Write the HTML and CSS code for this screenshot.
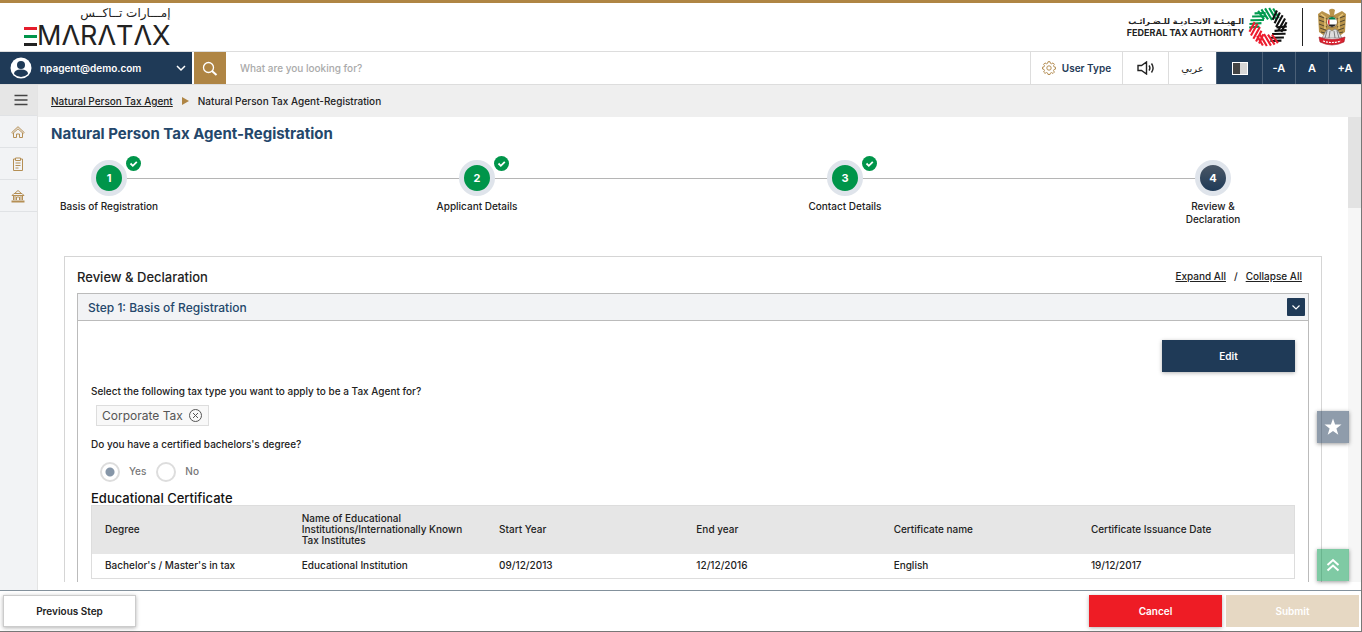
FILE: index.html
```html
<!DOCTYPE html>
<html lang="en">
<head>
  <meta charset="UTF-8" />
  <meta name="viewport" content="width=device-width, initial-scale=1" />
  <title>Natural Person Tax Agent-Registration</title>
  <link rel="stylesheet" href="styles.css">
</head>
<body>

  <header class="header">
    <a class="brand" href="#" aria-label="EmaraTax">
      <span class="brand-ar" lang="ar" dir="rtl">إمـــارات تــاكــس</span>
      <span class="brand-en"><span class="brand-bars"></span>MΛRΛTΛX</span>
    </a>
    <div class="authority">
      <div class="authority-name">
        <span class="authority-ar" lang="ar" dir="rtl">الـهيـئـة الاتحـاديـة للـضـرائـب</span>
        <span class="authority-en">FEDERAL TAX AUTHORITY</span>
      </div>
      <svg class="ring" viewBox="-20 -20 40 40" aria-hidden="true">
        <defs>
          <g id="hatch" fill="none" stroke-width="2.100">
            <path d="M-12-14.500L-5-7M-9-16.500L-1-7.500M-5.500-18L3-7.500M-1.500-19L7-8.500M2.500-19L9.500-10.500" />
          </g>
        </defs>
        <use href="#hatch" stroke="#009a4e" transform="rotate(-52)" />
        <use href="#hatch" stroke="#009a4e" transform="rotate(8)" />
        <use href="#hatch" stroke="#111" transform="rotate(68)" />
        <use href="#hatch" stroke="#111" transform="rotate(128)" />
        <use href="#hatch" stroke="#ed1c2e" transform="rotate(188)" />
        <use href="#hatch" stroke="#ed1c2e" transform="rotate(248)" />
      </svg>
      <span class="divider"></span>
      <svg class="emblem" viewBox="0 0 30 38" aria-hidden="true">
        <path d="M12 2q3-2.500 6 0l-1 5 4-2 4-2 4 3-1 18-7 5H9l-7-5L1 6l4-3 8 4z" fill="#b8934a" />
        <path d="M2 8l8 3M2 12l8 3M2 16l8 3M3 20l8 3M4 24l8 2M28 8l-8 3M28 12l-8 3M28 16l-8 3M27 20l-8 3M26 24l-8 2" stroke="#54482f" fill="none" />
        <path d="M4 6l4 3v12M26 6l-4 3v12" stroke="#e7c577" stroke-width="1.500" fill="none" />
        <circle cx="15" cy="14" r="5.500" fill="#fff" stroke="#8d6a2e" />
        <path d="M11 11.500a4.500 4.500 0 0 1 8 0z" fill="#00804a" />
        <path d="M11 16.500a4.500 4.500 0 0 0 8 0z" fill="#222" />
        <path d="M12.500 10.500v7a4.500 4.500 0 0 1 0-7z" fill="#e21f2d" />
        <path d="M9 23l3-2 3 2 3-2 3 2 4 7H5z" fill="#ddd" stroke="#777" stroke-width=".6" />
        <path d="M10 23l-2 7M13 23l-1 7M17 23l1 7M20 23l2 7" stroke="#555" stroke-width=".7" />
        <path d="M2 29q13 5 26 0l-1 5q-12 6-24 0z" fill="#d9202e" stroke="#a31824" stroke-width=".6" />
        <path d="M6 33q9 3 18 0" stroke="#fff" stroke-width="1.200" stroke-dasharray="2 1" fill="none" />
      </svg>
    </div>
  </header>

  <div class="toolbar">
    <button class="account" type="button">
      <svg width="22" height="22" viewBox="0 0 22 22" aria-hidden="true">
        <circle cx="11" cy="11" r="10.500" fill="#fff" />
        <circle cx="11" cy="8" r="4" fill="#1f3a57" />
        <path d="M4 17q0-4.500 7-4.500t7 4.500q-3 3-7 3t-7-3z" fill="#1f3a57" />
      </svg>
      <span class="account-name">npagent@demo.com</span>
      <svg width="10" height="8" viewBox="0 0 10 8" aria-hidden="true"><path d="M1 2l4 4 4-4" fill="none" stroke="#fff" stroke-width="1.500" /></svg>
    </button>
    <button class="search-btn" type="button" aria-label="Search">
      <svg width="16" height="16" viewBox="0 0 16 16" fill="none" stroke="#fff" aria-hidden="true">
        <circle cx="6.500" cy="7.500" r="5" stroke-width="1.300" />
        <path d="M10 11l4.500 4" stroke-width="2" />
      </svg>
    </button>
    <input class="search" type="text" placeholder="What are you looking for?" aria-label="What are you looking for?">
    <button class="tool user-type" type="button">
      <svg width="14" height="14" viewBox="0 0 14 14" fill="none" stroke="#b58f55" aria-hidden="true">
        <path d="M6 .7h2l.4 1.600 1.200.5 1.400-.9 1.400 1.400-.9 1.400.5 1.200 1.500.3v1.900l-1.500.4-.5 1.200.9 1.400-1.400 1.400-1.400-.9-1.200.5L8 13.500H6l-.4-1.500-1.200-.5-1.400.9L1.600 11l.9-1.400L2 8.400.5 8V6.200L2 5.900l.5-1.200-.9-1.400L3 1.900l1.400.9 1.200-.5z" />
        <circle cx="7" cy="7" r="2.200" />
      </svg>
      User Type
    </button>
    <button class="tool sound" type="button" aria-label="Read aloud">
      <svg width="18" height="14" viewBox="0 0 18 14" fill="none" stroke="#222" stroke-width="1.400" aria-hidden="true">
        <path d="M1 4.500h3.500L9.500 1v12L4.500 9.500H1zM12 4.500q1.800 2.500 0 5M14.500 2.500q3.200 4.500 0 9" />
      </svg>
    </button>
    <button class="tool arabic" type="button" lang="ar">عربي</button>
    <button class="tool dark contrast" type="button" aria-label="Contrast">
      <svg width="16" height="13" viewBox="0 0 16 13" aria-hidden="true">
        <path d="M0 0h16v13H0z" fill="#fff" />
        <path d="M1 1h7v11H1z" fill="#444" />
        <path d="M8 1h7v11H8z" fill="#d6d6d6" />
      </svg>
    </button>
    <button class="tool dark" type="button">-A</button>
    <button class="tool dark" type="button">A</button>
    <button class="tool dark" type="button">+A</button>
  </div>

  <div class="page">
    <nav class="sidebar" aria-label="Main">
      <button class="side-item menu" type="button" aria-label="Menu">
        <svg width="14" height="12" viewBox="0 0 14 12" stroke="#444" stroke-width="1.500" aria-hidden="true"><path d="M.5 1.500h13M.5 6h13M.5 10.500h13" /></svg>
      </button>
      <a class="side-item" href="#" aria-label="Home">
        <svg width="14" height="14" viewBox="0 0 14 14" fill="none" stroke="#b58f55" aria-hidden="true">
          <path d="M.8 7.500L7 1.700l6.200 5.800-1 1L7 3.800 1.800 8.500zM2.500 8v4.500h3V9h3v3.500h3V8" />
        </svg>
      </a>
      <a class="side-item" href="#" aria-label="Requests">
        <svg width="14" height="14" viewBox="0 0 14 14" fill="none" stroke="#b58f55" aria-hidden="true">
          <path d="M4.500 2h-2v11.500h9V2h-2M4.500 1h5v2.500h-5zM4.500 6h5M4.500 8.500h5M4.500 11h3" />
        </svg>
      </a>
      <a class="side-item" href="#" aria-label="Authority">
        <svg width="14" height="14" viewBox="0 0 14 14" fill="none" stroke="#b58f55" aria-hidden="true">
          <path d="M3.500 4.500L7 1.500l3.500 3M1 6.500l2-2h8l2 2zM2.500 7v4M11.500 7v4M5.500 11V8h3v3M4 7v4M10 7v4" />
          <path d="M.5 12.500h13" stroke-width="2" />
        </svg>
      </a>
    </nav>

    <main class="main">
      <nav class="breadcrumb" aria-label="Breadcrumb">
        <a href="#">Natural Person Tax Agent</a>
        <span class="arrow"></span>
        <span>Natural Person Tax Agent-Registration</span>
      </nav>

      <div class="scroller">
        <div class="content">
          <h1>Natural Person Tax Agent-Registration</h1>

          <ol class="steps">
            <li class="step done">
              <span class="dot">1</span>
              <svg class="tick" viewBox="0 0 15 15" aria-hidden="true"><circle cx="7.500" cy="7.500" r="7.500" fill="#00954a" /><path d="M4.500 7.500l2.300 2.300 4-4" fill="none" stroke="#fff" stroke-width="1.800" /></svg>
              <span class="step-label">Basis of Registration</span>
            </li>
            <li class="step done">
              <span class="dot">2</span>
              <svg class="tick" viewBox="0 0 15 15" aria-hidden="true"><circle cx="7.500" cy="7.500" r="7.500" fill="#00954a" /><path d="M4.500 7.500l2.300 2.300 4-4" fill="none" stroke="#fff" stroke-width="1.800" /></svg>
              <span class="step-label">Applicant Details</span>
            </li>
            <li class="step done">
              <span class="dot">3</span>
              <svg class="tick" viewBox="0 0 15 15" aria-hidden="true"><circle cx="7.500" cy="7.500" r="7.500" fill="#00954a" /><path d="M4.500 7.500l2.300 2.300 4-4" fill="none" stroke="#fff" stroke-width="1.800" /></svg>
              <span class="step-label">Contact Details</span>
            </li>
            <li class="step current">
              <span class="dot">4</span>
              <span class="step-label">Review &amp;<br>Declaration</span>
            </li>
          </ol>

          <section class="card">
            <div class="card-head">
              <h2>Review &amp; Declaration</h2>
              <div class="toggles"><a href="#">Expand All</a><span>/</span><a href="#">Collapse All</a></div>
            </div>

            <div class="panel">
              <div class="panel-head">
                <h3>Step 1: Basis of Registration</h3>
                <button class="collapse" type="button" aria-label="Collapse">
                  <svg width="10" height="8" viewBox="0 0 10 8" aria-hidden="true"><path d="M1.500 2.500L5 6l3.500-3.500" fill="none" stroke="#fff" stroke-width="1.200" /></svg>
                </button>
              </div>
              <div class="panel-body">
                <button class="btn edit" type="button">Edit</button>

                <p class="question">Select the following tax type you want to apply to be a Tax Agent for?</p>
                <div class="chip">
                  Corporate Tax
                  <button type="button" aria-label="Remove Corporate Tax">
                    <svg width="13" height="13" viewBox="0 0 13 13" fill="none" stroke="#555" aria-hidden="true"><circle cx="6.500" cy="6.500" r="6" /><path d="M4 4l5 5M9 4L4 9" /></svg>
                  </button>
                </div>

                <fieldset class="degree">
                  <legend class="question">Do you have a certified bachelors's degree?</legend>
                  <input type="radio" name="degree" id="degree-yes" checked><label for="degree-yes">Yes</label>
                  <input type="radio" name="degree" id="degree-no"><label for="degree-no">No</label>
                </fieldset>

                <h4>Educational Certificate</h4>
                <table>
                  <thead>
                    <tr>
                      <th>Degree</th>
                      <th>Name of Educational Institutions/Internationally Known Tax Institutes</th>
                      <th>Start Year</th>
                      <th>End year</th>
                      <th>Certificate name</th>
                      <th class="last">Certificate Issuance Date</th>
                    </tr>
                  </thead>
                  <tbody>
                    <tr>
                      <td>Bachelor's / Master's in tax</td>
                      <td>Educational Institution</td>
                      <td>09/12/2013</td>
                      <td>12/12/2016</td>
                      <td>English</td>
                      <td>19/12/2017</td>
                    </tr>
                  </tbody>
                </table>
              </div>
            </div>
          </section>
        </div>
        <div class="scrollbar"><div class="thumb"></div></div>

        <div class="floating">
          <button class="float-btn star" type="button" aria-label="Rate">
            <svg width="18" height="18" viewBox="0 0 18 18" aria-hidden="true"><path d="M9 .5l2.100 6h6.400l-5.100 3.900 1.900 6.300L9 12.900l-5.300 3.800 1.900-6.300L.5 6.500h6.400z" fill="#fff" /></svg>
          </button>
          <button class="float-btn up" type="button" aria-label="Back to top">
            <svg width="14" height="14" viewBox="0 0 14 14" fill="none" stroke="#fff" stroke-width="2" aria-hidden="true"><path d="M1.500 7L7 2l5.500 5M1.500 12.500L7 7.500l5.500 5" /></svg>
          </button>
        </div>
      </div>
    </main>
  </div>

  <footer class="footer">
    <button class="btn previous" type="button">Previous Step</button>
    <button class="btn cancel" type="button">Cancel</button>
    <button class="btn submit" type="button" disabled>Submit</button>
  </footer>

</body>
</html>
```
FILE: styles.css
```css
* {
  box-sizing: border-box;
}

body {
  display: flex;
  flex-direction: column;
  height: 100vh;
  margin: 0;
  overflow: hidden;
  border-right: 1px solid #777;
  border-bottom: 1px solid #777;
  background: #fff;
  color: #222;
  font-family: Inter, "DejaVu Sans", sans-serif;
  font-size: 10px;
  font-weight: 500;
}

button,
input {
  font: inherit;
}

button {
  padding: 0;
  border: 0;
  cursor: pointer;
}

a {
  color: inherit;
}

h1,
h2,
h3,
h4,
p {
  margin: 0;
}

/* header */
.header {
  display: flex;
  justify-content: space-between;
  height: 52px;
  border-top: 3px solid #af8544;
  border-bottom: 1px solid #ddd;
}

.brand {
  display: flex;
  flex-direction: column;
  align-items: flex-end;
  margin-left: 24px;
  text-decoration: none;
}

.brand-ar {
  font-family: "DejaVu Sans", sans-serif;
  font-size: 12px;
  line-height: 20px;
}

.brand-en {
  display: flex;
  align-items: center;
  font-size: 27px;
  font-weight: 400;
  line-height: 26px;
}

.brand-bars {
  width: 13px;
  height: 19px;
  border-top: 3px solid #e51d2c;
  border-bottom: 3px solid #222;
  background: linear-gradient(#00954a, #00954a) center / 100% 3px no-repeat;
}

.authority {
  display: flex;
  align-items: center;
  margin-right: 14px;
}

.authority-name {
  display: flex;
  flex-direction: column;
  align-items: flex-end;
}

.authority-ar {
  font-family: "DejaVu Sans", sans-serif;
  font-size: 8px;
  font-weight: 700;
  line-height: 12px;
}

.authority-en {
  font-size: 9px;
  font-weight: 700;
  line-height: 10px;
}

.ring {
  width: 40px;
  height: 40px;
  margin-left: 4px;
}

.divider {
  height: 38px;
  margin: 0 14px;
  border-left: 1px solid #222;
}

.emblem {
  width: 30px;
  height: 38px;
}

/* toolbar */
.toolbar {
  display: flex;
  height: 33px;
  border-bottom: 1px solid #ddd;
}

.account {
  display: flex;
  align-items: center;
  width: 192px;
  margin-right: 2px;
  padding: 0 6px 0 10px;
  background: #1f3a57;
  color: #fff;
  font-weight: 600;
}

.account-name {
  flex: 1;
  margin-left: 8px;
  text-align: left;
}

.search-btn {
  display: flex;
  align-items: center;
  justify-content: center;
  width: 32px;
  background: #af8544;
}

.search {
  flex: 1;
  padding: 0 14px;
  border: 0;
}

.search::placeholder {
  color: #aaa;
}

.tool {
  display: flex;
  align-items: center;
  justify-content: center;
  gap: 6px;
  width: 33px;
  border-left: 1px solid #ddd;
  background: #fff;
  color: #1f3a57;
  font-weight: 600;
}

.user-type {
  width: 92px;
}

.sound {
  width: 46px;
}

.arabic {
  width: 48px;
  color: #222;
  font-weight: 400;
}

.dark {
  border-left-color: #4b6077;
  background: #1f3a57;
  color: #fff;
  font-size: 11px;
}

.contrast {
  width: 46px;
}

/* page */
.page {
  display: flex;
  flex: 1;
  min-height: 0;
}

.sidebar {
  width: 38px;
  border-right: 1px solid #e4e4e4;
  background: #f2f3f5;
}

.side-item {
  display: flex;
  align-items: center;
  justify-content: center;
  width: 100%;
  height: 32px;
  padding-right: 2px;
  border-bottom: 1px solid #e0e2e5;
}

.menu {
  height: 31px;
  padding: 0 0 0 4px;
  background: #e6e6e6;
}

.main {
  display: flex;
  flex: 1;
  flex-direction: column;
  min-width: 0;
}

.breadcrumb {
  display: flex;
  align-items: center;
  gap: 9px;
  height: 32px;
  padding-left: 13px;
  background: #efefef;
}

.arrow {
  border: 4px solid transparent;
  border-right-width: 0;
  border-left: 7px solid #af8544;
}

.scroller {
  position: relative;
  display: flex;
  flex: 1;
  min-height: 0;
  margin-bottom: 8px;
}

.content {
  flex: 1;
  overflow: hidden;
  padding: 8px 26px 0 13px;
}

.scrollbar {
  width: 13px;
  background: #f6f6f6;
}

.thumb {
  height: 91px;
  background: #e3e3e3;
}

h1 {
  color: #24476b;
  font-size: 15px;
  font-weight: 700;
  line-height: 18px;
}

/* stepper */
.steps {
  position: relative;
  display: flex;
  justify-content: space-between;
  margin: 17px 51px 0 0;
  padding: 0;
  list-style: none;
}

.steps::before {
  position: absolute;
  top: 18px;
  right: 58px;
  left: 58px;
  border-top: 1px solid #b5b5b5;
  content: "";
}

.step {
  position: relative;
  display: flex;
  flex-direction: column;
  align-items: center;
  width: 116px;
}

.dot {
  display: flex;
  align-items: center;
  justify-content: center;
  width: 36px;
  height: 36px;
  border: 5px solid #dfe4eb;
  border-radius: 50%;
  background: #00954a;
  color: #fff;
  font-size: 11px;
  font-weight: 700;
}

.current .dot {
  background: linear-gradient(#4a5665, #1f3a57);
}

.tick {
  position: absolute;
  top: -4px;
  right: 26px;
  width: 15px;
  height: 15px;
}

.step-label {
  margin-top: 4px;
  line-height: 13px;
  text-align: center;
}

/* review card */
.card {
  margin: 30px 0 0 13px;
  padding: 12px 12px 40px;
  border: 1px solid #d5d5d5;
}

.card-head {
  display: flex;
  align-items: flex-start;
  justify-content: space-between;
  padding: 0 7px 7px 0;
}

h2 {
  font-size: 13px;
  font-weight: 500;
  line-height: 17px;
}

.toggles {
  display: flex;
  gap: 8px;
  line-height: 14px;
}

.panel {
  border: 1px solid #bbb;
}

.panel-head {
  display: flex;
  align-items: center;
  justify-content: space-between;
  height: 27px;
  padding: 0 3px 0 10px;
  border-bottom: 1px solid #bbb;
  background: #f2f3f5;
}

h3 {
  color: #24476b;
  font-size: 12px;
  font-weight: 500;
}

.collapse {
  display: flex;
  align-items: center;
  justify-content: center;
  width: 18px;
  height: 18px;
  border-radius: 1px;
  background: #1f3a57;
}

.panel-body {
  display: flex;
  flex-direction: column;
  padding: 19px 13px 40px;
}

.btn {
  width: 133px;
  height: 32px;
  box-shadow: 0 1px 4px rgba(0, 0, 0, 0.3);
  color: #fff;
  font-weight: 600;
}

.edit {
  align-self: flex-end;
  background: #1f3a57;
}

.question {
  padding: 0;
  line-height: 13px;
}

.edit + .question {
  margin-top: 13px;
}

.chip {
  display: flex;
  align-items: center;
  align-self: flex-start;
  gap: 6px;
  height: 21px;
  margin: 7px 0 12px 5px;
  padding: 0 6px 0 5px;
  border: 1px solid #ddd;
  background: #f8f8f8;
  color: #555;
  font-size: 12px;
  font-weight: 400;
}

.chip button {
  display: flex;
  background: none;
}

.degree {
  display: flex;
  align-items: center;
  margin: 0;
  padding: 0 0 0 9px;
  border: 0;
  color: #777;
}

.degree legend {
  margin-left: -9px;
  color: #222;
}

.degree input {
  width: 20px;
  height: 20px;
  margin: 11px 9px 9px 0;
  border: 2px solid #ddd;
  border-radius: 50%;
  appearance: none;
}

.degree input:checked {
  background: radial-gradient(circle, #8696a8 4px, transparent 5px);
}

.degree label {
  margin-right: 10px;
}

h4 {
  color: #111;
  font-size: 13px;
  font-weight: 500;
  line-height: 14px;
}

table {
  width: 100%;
  border: 1px solid #ddd;
  border-collapse: collapse;
  table-layout: fixed;
}

th,
td {
  height: 25px;
  padding: 0 13px;
  font-weight: 500;
  line-height: 11px;
  text-align: left;
}

th {
  width: 16.4%;
  height: 48px;
  background: #e6e6e6;
}

.last {
  width: auto;
}

/* floating buttons */
.floating {
  position: absolute;
  right: 12px;
  bottom: 1px;
  display: flex;
  flex-direction: column;
  gap: 106px;
}

.float-btn {
  display: flex;
  align-items: center;
  justify-content: center;
  width: 32px;
  height: 32px;
  box-shadow: 0 1px 4px rgba(0, 0, 0, 0.4);
}

.star {
  background: rgba(31, 58, 87, 0.5);
}

.up {
  background: rgba(0, 149, 74, 0.5);
}

/* footer */
.footer {
  display: flex;
  align-items: flex-start;
  gap: 4px;
  height: 41px;
  padding: 4px 2px 0 3px;
  border-top: 1px solid #83919c;
}

.previous {
  margin-right: auto;
  border: 1px solid #ccc;
  background: #fff;
  color: #222;
}

.cancel {
  background: #ee1c25;
}

.submit {
  background: #e6d8c3;
  box-shadow: none;
}
```
